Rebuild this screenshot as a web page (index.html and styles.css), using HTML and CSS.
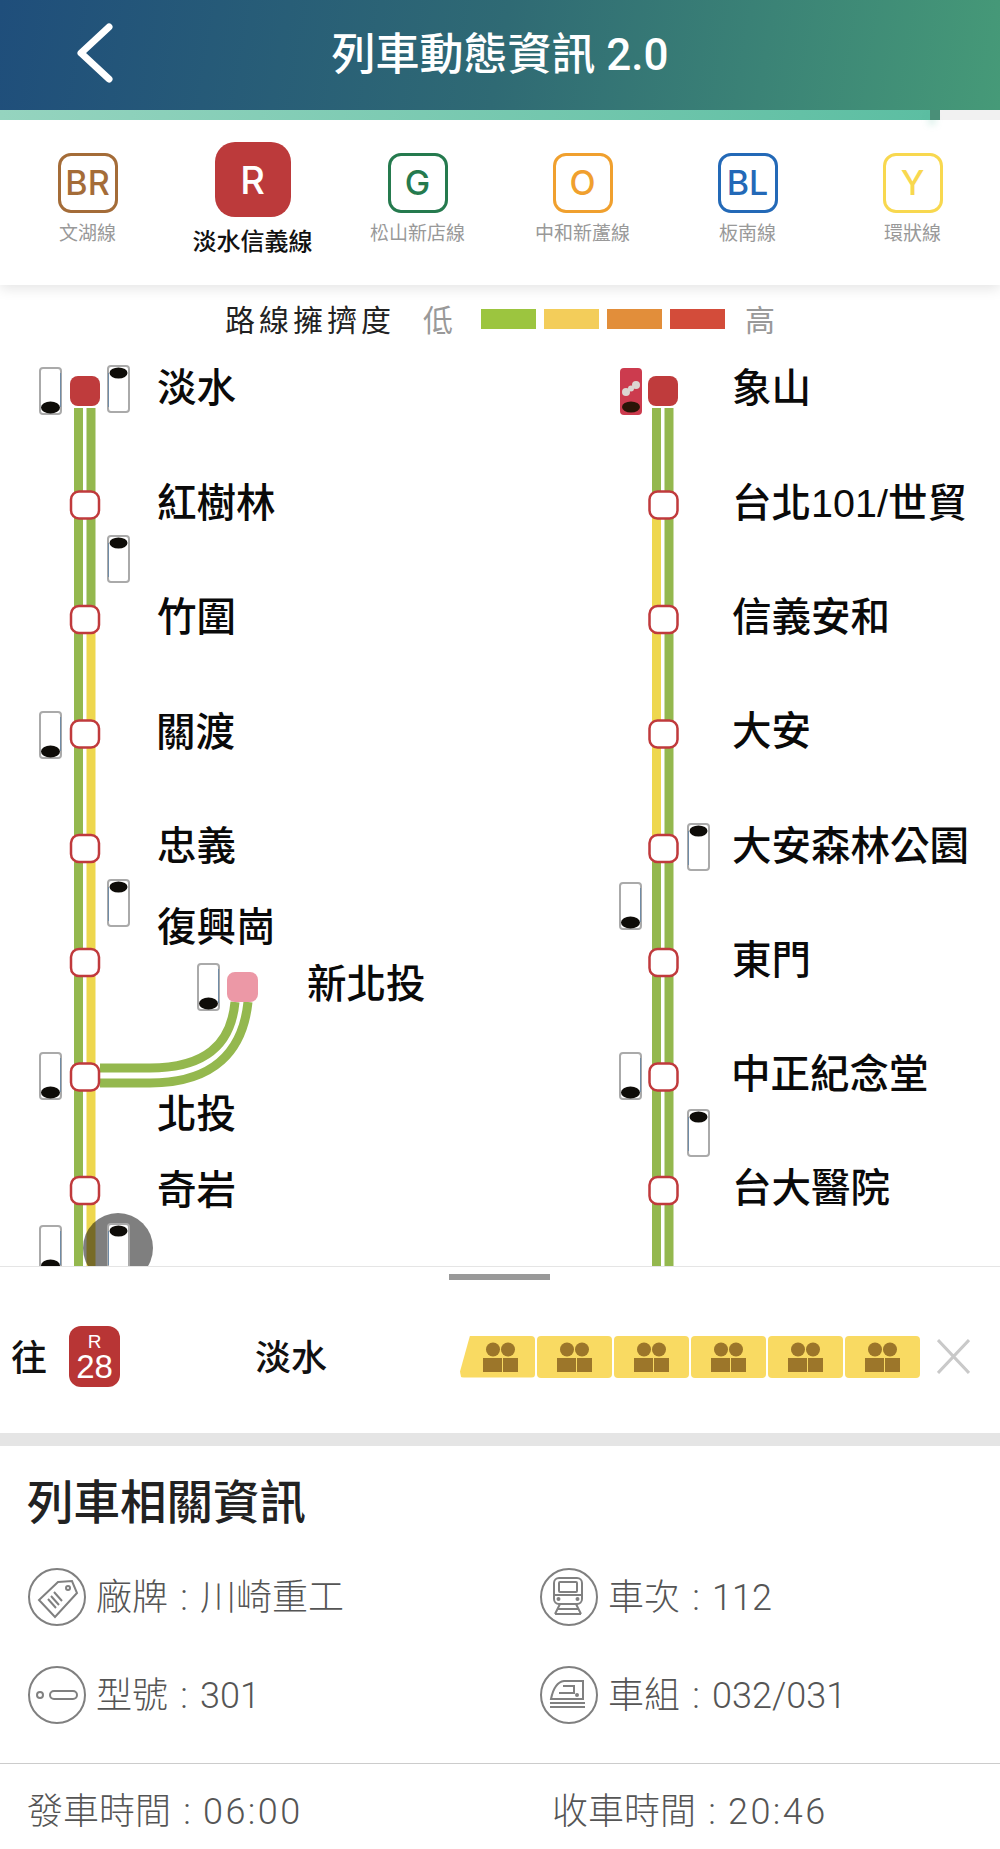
FILE: index.html
```html
<!DOCTYPE html>
<html lang="zh-Hant">
<head>
    <meta charset="UTF-8">
    <meta name="viewport" content="width=device-width, initial-scale=1.0">
    <title>列車動態資訊 2.0</title>
    <link rel="stylesheet" href="styles.css">
</head>
<body>
<div class="app">
    <header class="topbar">
        <svg class="back" width="50" height="70" viewBox="0 0 50 70"><path d="M39 7 11 33l28 26"/></svg>
        <h1 class="topbar-title">列車動態資訊 2.0</h1>
    </header>
    <div class="strip"><div class="strip-fill"></div><div class="strip-end"></div></div>

    <nav class="tabs">
        <div class="tab"><div class="tab-icon line-br">BR</div><div class="tab-name">文湖線</div></div>
        <div class="tab tab-active"><div class="tab-icon line-r">R</div><div class="tab-name">淡水信義線</div></div>
        <div class="tab"><div class="tab-icon line-g">G</div><div class="tab-name">松山新店線</div></div>
        <div class="tab"><div class="tab-icon line-o">O</div><div class="tab-name">中和新蘆線</div></div>
        <div class="tab"><div class="tab-icon line-bl">BL</div><div class="tab-name">板南線</div></div>
        <div class="tab"><div class="tab-icon line-y">Y</div><div class="tab-name">環狀線</div></div>
    </nav>

    <div class="legend">
        <span class="legend-title">路線擁擠度</span>
        <span class="legend-end">低</span>
        <span class="legend-bar bar-low"></span>
        <span class="legend-bar bar-mid"></span>
        <span class="legend-bar bar-high"></span>
        <span class="legend-bar bar-full"></span>
        <span class="legend-end legend-end-high">高</span>
    </div>

    <!-- viewBox uses page coordinates so the map can be read against the screenshot -->
    <svg class="map" width="1000" height="921" viewBox="0 345 1000 921">
        <defs>
            <g id="train-down">
                <rect class="train-body" x="1" y="1" width="21" height="46" rx="3"/>
                <path class="train-edge" d="M21.5 6v34"/>
                <ellipse class="train-nose" cx="11.5" cy="40.500" rx="9.500" ry="6"/>
            </g>
            <g id="train-up">
                <rect class="train-body" x="1" y="1" width="21" height="46" rx="3"/>
                <path class="train-edge" d="M1.5 8v34"/>
                <ellipse class="train-nose" cx="11.5" cy="8" rx="9" ry="5.500"/>
            </g>
        </defs>

        <path class="rail rail-green" d="M78.5 408V1266"/>
        <path class="rail rail-green" d="M91 408V619"/>
        <path class="rail rail-yellow" d="M91 619V1266"/>
        <path class="rail rail-green" d="M100 1068H150C205 1068 231 1045 235 1002"/>
        <path class="rail rail-green" d="M100 1083H150C215 1083 243 1050 248 1002"/>

        <path class="rail rail-green" d="M656.5 408V505"/>
        <path class="rail rail-yellow" d="M656.5 505V848"/>
        <path class="rail rail-green" d="M656.5 848V1266"/>
        <path class="rail rail-green" d="M669 408V1266"/>

        <rect class="node-end" x="70" y="376" width="30" height="30" rx="8"/>
        <rect class="node" x="71" y="491.5" width="28" height="27" rx="8"/>
        <rect class="node" x="71" y="606" width="28" height="27" rx="8"/>
        <rect class="node" x="71" y="720.5" width="28" height="27" rx="8"/>
        <rect class="node" x="71" y="835" width="28" height="27" rx="8"/>
        <rect class="node" x="71" y="949" width="28" height="27" rx="8"/>
        <rect class="node" x="71" y="1063.5" width="28" height="27" rx="8"/>
        <rect class="node" x="71" y="1177" width="28" height="27" rx="8"/>
        <rect class="node-branch" x="227" y="972" width="31" height="30" rx="8"/>

        <rect class="node-end" x="648" y="376" width="30" height="30" rx="8"/>
        <rect class="node" x="649.5" y="491.5" width="28" height="27" rx="8"/>
        <rect class="node" x="649.5" y="606" width="28" height="27" rx="8"/>
        <rect class="node" x="649.5" y="720.5" width="28" height="27" rx="8"/>
        <rect class="node" x="649.5" y="835" width="28" height="27" rx="8"/>
        <rect class="node" x="649.5" y="949" width="28" height="27" rx="8"/>
        <rect class="node" x="649.5" y="1063.5" width="28" height="27" rx="8"/>
        <rect class="node" x="649.5" y="1177" width="28" height="27" rx="8"/>

        <use href="#train-down" x="39" y="367"/>
        <use href="#train-up" x="107" y="365"/>
        <use href="#train-up" x="107" y="535"/>
        <use href="#train-down" x="39" y="711"/>
        <use href="#train-up" x="107" y="879"/>
        <use href="#train-down" x="197" y="963"/>
        <use href="#train-down" x="39" y="1052"/>
        <use href="#train-down" x="39" y="1225"/>
        <circle class="train-focus" cx="118" cy="1248" r="35"/>
        <use href="#train-up" x="107" y="1223"/>

        <g>
            <rect class="train-red" x="620" y="368" width="22" height="47" rx="4"/>
            <circle class="train-mark" cx="626" cy="392" r="4"/>
            <circle class="train-mark" cx="631" cy="388.5" r="3"/>
            <circle class="train-mark" cx="636" cy="385" r="4"/>
            <ellipse class="train-nose-red" cx="631" cy="407" rx="9" ry="5.500"/>
        </g>
        <use href="#train-up" x="687" y="823"/>
        <use href="#train-down" x="619" y="882"/>
        <use href="#train-down" x="619" y="1052"/>
        <use href="#train-up" x="687" y="1109"/>

        <text class="station" x="157" y="402">淡水</text>
        <text class="station" x="157" y="517">紅樹林</text>
        <text class="station" x="157" y="631">竹圍</text>
        <text class="station" x="156" y="746">關渡</text>
        <text class="station" x="157" y="860">忠義</text>
        <text class="station" x="157" y="941">復興崗</text>
        <text class="station" x="307" y="998">新北投</text>
        <text class="station" x="157" y="1128">北投</text>
        <text class="station" x="157" y="1204">奇岩</text>

        <text class="station" x="732" y="402">象山</text>
        <text class="station" x="732" y="517">台北101/世貿</text>
        <text class="station" x="732" y="631">信義安和</text>
        <text class="station" x="732" y="745">大安</text>
        <text class="station" x="732" y="860">大安森林公園</text>
        <text class="station" x="732" y="974">東門</text>
        <text class="station" x="731" y="1088">中正紀念堂</text>
        <text class="station" x="732" y="1202">台大醫院</text>
    </svg>

    <section class="sheet">
        <div class="handle"></div>
        <div class="direction">
            <span class="direction-word">往</span>
            <div class="badge"><span class="badge-line">R</span><span class="badge-num">28</span></div>
            <span class="direction-dest">淡水</span>
            <svg width="0" height="0" class="defs-only">
                <defs>
                    <g id="people">
                        <circle cx="10" cy="7.5" r="7"/>
                        <circle cx="25" cy="7.5" r="7"/>
                        <rect x="0" y="16" width="19" height="14"/>
                        <rect x="20" y="16" width="15" height="14"/>
                    </g>
                </defs>
            </svg>
            <div class="cars">
                <div class="car car-head"><svg class="people" width="35" height="30"><use href="#people"/></svg></div>
                <div class="car"><svg class="people" width="35" height="30"><use href="#people"/></svg></div>
                <div class="car"><svg class="people" width="35" height="30"><use href="#people"/></svg></div>
                <div class="car"><svg class="people" width="35" height="30"><use href="#people"/></svg></div>
                <div class="car"><svg class="people" width="35" height="30"><use href="#people"/></svg></div>
                <div class="car"><svg class="people" width="35" height="30"><use href="#people"/></svg></div>
            </div>
            <svg class="close" width="33" height="35" viewBox="0 0 33 35"><path d="M1 1l31 33M32 1 1 34"/></svg>
        </div>
        <div class="band"></div>

        <h2 class="info-title">列車相關資訊</h2>
        <div class="info-grid">
            <div class="info-item">
                <svg class="info-icon" width="60" height="60" viewBox="0 0 60 60">
                    <circle cx="30" cy="30" r="28"/>
                    <path d="M31 15l14-1 5 12-22 24-16-17z"/>
                    <circle cx="41" cy="21" r="2"/>
                    <path d="M24 29l8 9M21 32l8 9M27 25l8 9"/>
                </svg>
                <span class="info-text">廠牌 : 川崎重工</span>
            </div>
            <div class="info-item">
                <svg class="info-icon" width="60" height="60" viewBox="0 0 60 60">
                    <circle cx="30" cy="30" r="28"/>
                    <rect x="15" y="11" width="28" height="26" rx="5"/>
                    <rect x="20" y="15" width="18" height="10" rx="1"/>
                    <path d="M15 28h28M21 37l-5 10M37 37l5 10M18 42h22M16 47h26"/>
                    <circle cx="19.500" cy="32" r="1"/>
                    <circle cx="38.500" cy="32" r="1"/>
                </svg>
                <span class="info-text">車次 : 112</span>
            </div>
            <div class="info-item">
                <svg class="info-icon" width="60" height="60" viewBox="0 0 60 60">
                    <circle cx="30" cy="30" r="28"/>
                    <rect x="23" y="26" width="27" height="8" rx="4"/>
                    <circle cx="13" cy="30" r="3"/>
                </svg>
                <span class="info-text">型號 : 301</span>
            </div>
            <div class="info-item">
                <svg class="info-icon" width="60" height="60" viewBox="0 0 60 60">
                    <circle cx="30" cy="30" r="28"/>
                    <path d="M12 34c2-10 6-17 13-18h19v18z"/>
                    <path d="M24 21h11v7H20"/>
                    <path d="M11 38h35M11 42h35"/>
                    <circle cx="38" cy="30" r="1"/>
                </svg>
                <span class="info-text">車組 : 032/031</span>
            </div>
        </div>
        <div class="times">
            <span>發車時間 : <span class="time-num">06:00</span></span>
            <span>收車時間 : <span class="time-num">20:46</span></span>
        </div>
    </section>
</div>
</body>
</html>
```

FILE: styles.css
```css
* {
    box-sizing: border-box;
}
body {
    margin: 0;
    background: #fff;
    font-family: "Liberation Sans", "Noto Sans CJK TC", sans-serif;
}
.app {
    width: 1000px;
    height: 1849px;
    overflow: hidden;
    display: flex;
    flex-direction: column;
}

/* top bar */
.topbar {
    height: 110px;
    flex: none;
    display: grid;
    grid-template-columns: 1fr auto 1fr;
    align-items: center;
    background: linear-gradient(100deg, #1f4e7b 0%, #2f6a74 50%, #469a78 100%);
}
.back {
    grid-column: 1;
    grid-row: 1;
    margin-left: 70px;
    fill: none;
    stroke: #fff;
    stroke-width: 7;
    stroke-linecap: round;
    stroke-linejoin: round;
}
.topbar-title {
    grid-column: 2;
    grid-row: 1;
    margin: 0;
    color: #fff;
    font-family: Roboto, "Noto Sans CJK TC", sans-serif;
    font-size: 44px;
    font-weight: 500;
    line-height: 1;
}
.strip {
    height: 10px;
    flex: none;
    display: flex;
    position: relative;
    z-index: 1;
    background: #f1f1f1;
}
.strip-fill {
    width: 930px;
    background: linear-gradient(90deg, #95d4bf, #5cbea2);
}
.strip-end {
    width: 10px;
    background: #4a8f78;
    box-shadow: -3px 6px 7px -2px rgba(90, 190, 160, 0.35);
}

/* line tabs */
.tabs {
    height: 165px;
    flex: none;
    position: relative;
    padding: 0 5px;
    display: grid;
    grid-template-columns: repeat(6, 165px);
    background: #fff;
    box-shadow: 0 4px 12px rgba(0, 0, 0, 0.1);
}
.tab {
    display: flex;
    flex-direction: column;
    align-items: center;
    padding-top: 33px;
}
.tab-icon {
    width: 60px;
    height: 60px;
    display: flex;
    align-items: center;
    justify-content: center;
    border: 3px solid;
    border-radius: 13px;
    font-family: Inter, sans-serif;
    font-size: 34px;
    font-weight: 500;
    line-height: 1;
}
.tab-name {
    margin-top: 7px;
    color: #999;
    font-size: 19px;
    line-height: 28px;
}
.tab-active {
    padding-top: 22px;
}
.tab-active .tab-icon {
    width: 76px;
    height: 75px;
    border: 0;
    border-radius: 20px;
    background: #bc3a3b;
    color: #fff;
    font-size: 38px;
}
.tab-active .tab-name {
    margin-top: 8px;
    color: #111;
    font-size: 24px;
    font-weight: 500;
    line-height: 34px;
}
.line-br { color: #a46c38; }
.line-g { color: #257a4e; }
.line-o { color: #f0a02e; }
.line-bl { color: #2369b7; }
.line-y { color: #f8d84f; }

/* crowding legend */
.legend {
    height: 60px;
    flex: none;
    display: flex;
    align-items: center;
    padding: 8px 0 0 225px;
}
.legend-title {
    width: 167px;
    margin-top: -2px;
    color: #222;
    font-size: 30px;
    letter-spacing: 4px;
    white-space: nowrap;
}
.legend-end {
    margin: -2px 28px 0 31px;
    color: #999;
    font-size: 30px;
}
.legend-end-high {
    margin: -2px 0 0 20px;
}
.legend-bar {
    width: 55px;
    height: 20px;
    margin-right: 8px;
}
.legend-bar.bar-full {
    margin-right: 0;
}
.bar-low { background: #9cc53f; }
.bar-mid { background: #f3cd5a; }
.bar-high { background: #e28e3a; }
.bar-full { background: #d34c3a; }

/* route map */
.map {
    flex: none;
    display: block;
}
.rail {
    fill: none;
    stroke-width: 9;
}
.rail-green { stroke: #94b84e; }
.rail-yellow { stroke: #eed74e; }
.node {
    fill: #fff;
    stroke: #c03a3c;
    stroke-width: 2.5;
}
.node-end { fill: #bf3b3c; }
.node-branch { fill: #ec98a6; }
.train-body {
    fill: #fff;
    stroke: #aaa;
    stroke-width: 2;
}
.train-edge {
    fill: none;
    stroke: #6f8ba6;
    stroke-width: 1;
}
.train-nose {
    fill: #0e0c08;
    filter: blur(0.6px);
}
.train-focus { fill: rgba(0, 0, 0, 0.5); }
.train-red { fill: #cc3b4e; }
.train-mark { fill: #dcd6d2; }
.train-nose-red {
    fill: #2a1507;
    filter: blur(0.6px);
}
.station {
    fill: #0a0a0a;
    font-size: 39.5px;
    font-weight: 500;
}

/* bottom sheet */
.sheet {
    flex: 1;
    border-top: 1px solid #e5e5e5;
    background: #fff;
    position: relative;
}
.handle {
    width: 101px;
    height: 6px;
    margin: 7px auto 0 449px;
    background: #999;
}
.direction {
    height: 153px;
    display: flex;
    align-items: center;
    padding-left: 11px;
}
.direction-word,
.direction-dest {
    flex: none;
    margin-bottom: 4px;
    color: #111;
    font-size: 36px;
    font-weight: 500;
}
.badge {
    flex: none;
    width: 51px;
    height: 61px;
    margin-left: 22px;
    display: flex;
    flex-direction: column;
    align-items: center;
    justify-content: center;
    border-radius: 12px;
    background: #b83535;
    color: #fff;
}
.badge-line {
    font-size: 19px;
    line-height: 20px;
}
.badge-num {
    font-size: 33px;
    line-height: 30px;
}
.direction-dest {
    margin-left: 135px;
    width: 205px;
}
.defs-only {
    position: absolute;
}
.cars {
    flex: none;
    width: 460px;
    display: flex;
    gap: 2px;
}
.car {
    width: 75px;
    height: 42px;
    display: flex;
    align-items: center;
    justify-content: center;
    border-radius: 4px;
    background: #f9da62;
}
.car-head {
    clip-path: polygon(10px 0, 100% 0, 100% 100%, 1px 100%, 0 36px);
    padding-left: 5px;
}
.people {
    flex: none;
    fill: #9c762a;
}
.close {
    flex: none;
    margin-left: 17px;
    fill: none;
    stroke: #c9c9c9;
    stroke-width: 3;
}
.band {
    height: 13px;
    background: #e5e5e5;
}
.info-title {
    margin: 24px 0 0 27px;
    color: #222;
    font-size: 46.500px;
    font-weight: 500;
    line-height: 66px;
}
.info-grid {
    margin-top: 31px;
    padding-left: 27px;
    display: grid;
    grid-template-columns: 512px 1fr;
    row-gap: 38px;
}
.info-item {
    display: flex;
    align-items: center;
    gap: 9px;
    color: #555;
    font-family: Roboto, "Noto Sans CJK TC", sans-serif;
    font-size: 36px;
    font-weight: 300;
    word-spacing: 3.5px;
}
.info-text {
    margin-bottom: 7px;
}
.info-icon {
    flex: none;
    fill: none;
    stroke: #808080;
    stroke-width: 2;
}
.times {
    margin-top: 38px;
    padding: 20px 0 0 27px;
    border-top: 1px solid #ccc;
    display: grid;
    grid-template-columns: 525px 1fr;
    color: #555;
    font-family: Roboto, "Noto Sans CJK TC", sans-serif;
    font-size: 36px;
    font-weight: 300;
    line-height: 56px;
    word-spacing: 3.5px;
}
.time-num {
    letter-spacing: 2.400px;
}
```
